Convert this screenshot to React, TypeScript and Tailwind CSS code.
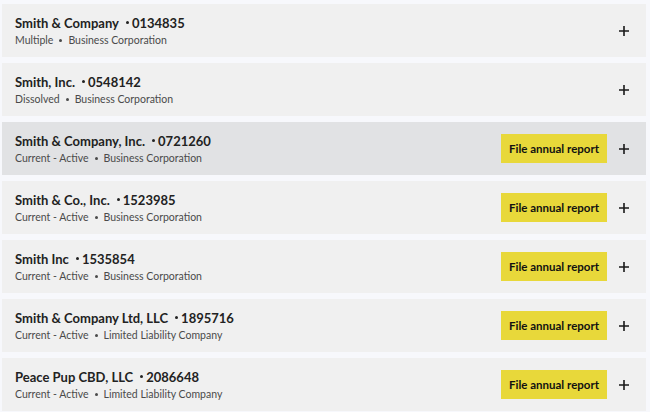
const rows = [
  { name: "Smith & Company", num: "0134835", status: "Multiple", type: "Business Corporation", file: false },
  { name: "Smith, Inc.", num: "0548142", status: "Dissolved", type: "Business Corporation", file: false },
  { name: "Smith & Company, Inc.", num: "0721260", status: "Current - Active", type: "Business Corporation", file: true, active: true },
  { name: "Smith & Co., Inc.", num: "1523985", status: "Current - Active", type: "Business Corporation", file: true },
  { name: "Smith Inc", num: "1535854", status: "Current - Active", type: "Business Corporation", file: true },
  { name: "Smith & Company Ltd, LLC", num: "1895716", status: "Current - Active", type: "Limited Liability Company", file: true },
  { name: "Peace Pup CBD, LLC", num: "2086648", status: "Current - Active", type: "Limited Liability Company", file: true },
];

function Plus() {
  return (
    <svg width="12" height="12" viewBox="0 0 12 12" className="text-[#1a1a1a]">
      <path d="M6 1v10M1 6h10" stroke="currentColor" strokeWidth="1.6" />
    </svg>
  );
}

export default function App() {
  return (
    <div className="min-h-screen w-[650px] bg-[#f7f8fc] pt-[4px] pl-[2px] pr-[4px] font-['Lato',sans-serif]">
      <div className="flex flex-col gap-[6px]">
        {rows.map((r) => (
          <div
            key={r.num}
            className={`flex h-[53px] items-center justify-between pl-[13px] pr-[16px] ${r.active ? "bg-[#e1e2e4]" : "bg-[#f0f0f0]"}`}
          >
            <div className="flex flex-col">
              <div className="flex items-center text-[13px] font-bold leading-[18px] text-[#222]">
                {r.name}
                <span className="ml-[7px] mr-[3px] h-[3px] w-[3px] rounded-full bg-[#222]" />
                {r.num}
              </div>
              <div className="mt-[1px] flex items-center text-[10.5px] leading-[15px] text-[#4a4a4a]">
                {r.status}
                <span className="mx-[6px] h-[3px] w-[3px] rounded-full bg-[#4a4a4a]" />
                {r.type}
              </div>
            </div>
            <div className="flex items-center gap-[11px]">
              {r.file && (
                <button className="h-[29px] w-[106px] bg-[#e8d83a] text-[11.5px] font-bold text-[#111]">
                  File annual report
                </button>
              )}
              <Plus />
            </div>
          </div>
        ))}
      </div>
    </div>
  );
}
